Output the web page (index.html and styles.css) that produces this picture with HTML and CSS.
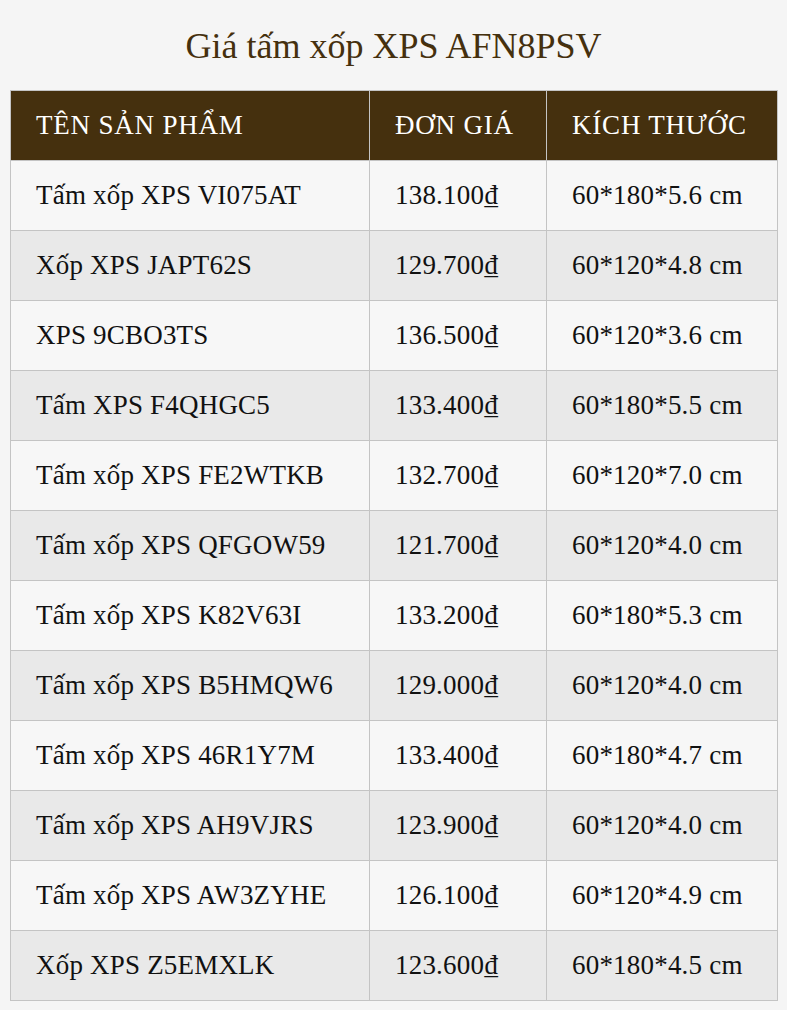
FILE: index.html
```html
<!DOCTYPE html>
<html lang="vi">
<head>
<meta charset="utf-8">
<link rel="stylesheet" href="styles.css">
</head>
<body>
<h2 class="title">Giá tấm xốp XPS AFN8PSV</h2>
<table class="price-table">
  <colgroup><col class="c1"><col class="c2"><col class="c3"></colgroup>
  <thead>
    <tr><th>TÊN SẢN PHẨM</th><th>ĐƠN GIÁ</th><th>KÍCH THƯỚC</th></tr>
  </thead>
  <tbody>
    <tr><td>Tấm xốp XPS VI075AT</td><td>138.100₫</td><td>60*180*5.6 cm</td></tr>
    <tr><td>Xốp XPS JAPT62S</td><td>129.700₫</td><td>60*120*4.8 cm</td></tr>
    <tr><td>XPS 9CBO3TS</td><td>136.500₫</td><td>60*120*3.6 cm</td></tr>
    <tr><td>Tấm XPS F4QHGC5</td><td>133.400₫</td><td>60*180*5.5 cm</td></tr>
    <tr><td>Tấm xốp XPS FE2WTKB</td><td>132.700₫</td><td>60*120*7.0 cm</td></tr>
    <tr><td>Tấm xốp XPS QFGOW59</td><td>121.700₫</td><td>60*120*4.0 cm</td></tr>
    <tr><td>Tấm xốp XPS K82V63I</td><td>133.200₫</td><td>60*180*5.3 cm</td></tr>
    <tr><td>Tấm xốp XPS B5HMQW6</td><td>129.000₫</td><td>60*120*4.0 cm</td></tr>
    <tr><td>Tấm xốp XPS 46R1Y7M</td><td>133.400₫</td><td>60*180*4.7 cm</td></tr>
    <tr><td>Tấm xốp XPS AH9VJRS</td><td>123.900₫</td><td>60*120*4.0 cm</td></tr>
    <tr><td>Tấm xốp XPS AW3ZYHE</td><td>126.100₫</td><td>60*120*4.9 cm</td></tr>
    <tr><td>Xốp XPS Z5EMXLK</td><td>123.600₫</td><td>60*180*4.5 cm</td></tr>
  </tbody>
</table>
</body>
</html>
```
FILE: styles.css
```css
html, body {
  margin: 0;
  padding: 0;
  background: #f5f5f5;
}
body {
  padding: 0 10px;
  font-family: "Liberation Serif", "DejaVu Serif", serif;
  color: #111;
}
.title {
  margin: 0;
  height: 90px;
  line-height: 92px;
  text-align: center;
  font-weight: normal;
  font-size: 36px;
  color: #45300e;
}
.price-table {
  width: 767px;
  border-collapse: collapse;
  table-layout: fixed;
  font-size: 27px;
  letter-spacing: 0.2px;
}
.c1 { width: 359px; }
.c2 { width: 177px; }
.c3 { width: 231px; }
.price-table th,
.price-table td {
  border: 1px solid #c4c4c4;
  height: 69px;
  padding: 0 0 0 25px;
  text-align: left;
  font-weight: normal;
  white-space: nowrap;
}
.price-table th {
  background: #45300e;
  color: #fff;
  font-size: 27px;
  letter-spacing: 0.8px;
}
.price-table tbody tr:nth-child(odd) td { background: #f7f7f7; }
.price-table tbody tr:nth-child(even) td { background: #e9e9e9; }
```
